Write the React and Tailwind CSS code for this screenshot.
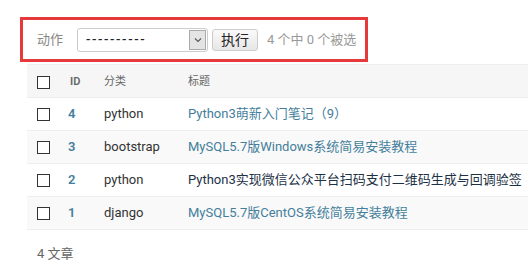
const ROWS = [
  { id: 4, cat: 'python', title: 'Python3萌新入门笔记（9）', dark: false },
  { id: 3, cat: 'bootstrap', title: 'MySQL5.7版Windows系统简易安装教程', dark: false },
  { id: 2, cat: 'python', title: 'Python3实现微信公众平台扫码支付二维码生成与回调验签', dark: true },
  { id: 1, cat: 'django', title: 'MySQL5.7版CentOS系统简易安装教程', dark: false },
];

const font = { fontFamily: 'Roboto, "Noto Sans CJK SC", "Liberation Sans", sans-serif' };

function Box() {
  return <div className="w-[13px] h-[13px] border-[1.5px] border-[#333] bg-white" />;
}

export default function App() {
  return (
    <div className="w-[528px] h-[262px] overflow-hidden bg-white text-[13px] text-[#333]" style={font}>
      <div className="pt-[17px] pl-[20px]">
        {/* actions */}
        <div className="w-[348px] h-[45px] border-[3px] border-[#e5393c] flex items-center pl-[14px]">
          <span className="text-[13px] text-[#888] mr-[14px]">动作</span>
          <div className="flex w-[131px] h-[24px] border border-[#ccc] rounded-[3px] bg-white items-center">
            <span className="flex-1 pl-[8px] text-[13px] font-medium text-[#222] tracking-[1.6px]">----------</span>
            <div className="w-[17px] h-[20px] mr-[1px] border border-[#aaa] bg-[#e4e4e4] flex items-center justify-center">
              <svg width="8" height="6" viewBox="0 0 8 6"><path d="M1 1.5 L4 4.5 L7 1.5" fill="none" stroke="#555" strokeWidth="1.1" /></svg>
            </div>
          </div>
          <button className="ml-[4px] h-[22px] px-[8px] border border-[#ccc] rounded-[3px] bg-gradient-to-b from-[#fafafa] to-[#e6e6e6] text-[14px] text-[#222] leading-none">执行</button>
          <span className="ml-[9px] text-[13px] text-[#999]">4 个中 0 个被选</span>
        </div>
      </div>

      {/* table */}
      <div className="ml-[27px] mt-[2px] w-[520px]">
        <div className="flex items-center h-[34px] pt-[2px] bg-[#f6f6f6] border-t border-b border-[#eee] text-[11px] text-[#666]">
          <div className="w-[33px] pl-[10px]"><Box /></div>
          <div className="w-[44px] pl-[10px] font-semibold">ID</div>
          <div className="w-[84px]">分类</div>
          <div className="flex-1">标题</div>
        </div>
        {ROWS.map((r, i) => (
          <div key={r.id} className={`flex items-center h-[33px] border-b border-[#eee] ${i % 2 ? 'bg-[#f9f9f9]' : 'bg-white'}`}>
            <div className="w-[33px] pl-[10px]"><Box /></div>
            <div className="w-[44px] pl-[8px] font-semibold text-[#447e9b]">{r.id}</div>
            <div className="w-[84px]">{r.cat}</div>
            <div className={`flex-1 whitespace-nowrap ${r.dark ? 'text-[#1e3246]' : 'text-[#447e9b]'}`}>{r.title}</div>
          </div>
        ))}
        <div className="pl-[10px] pt-[14px] text-[13px] text-[#666]">4 文章</div>
      </div>
    </div>
  );
}
